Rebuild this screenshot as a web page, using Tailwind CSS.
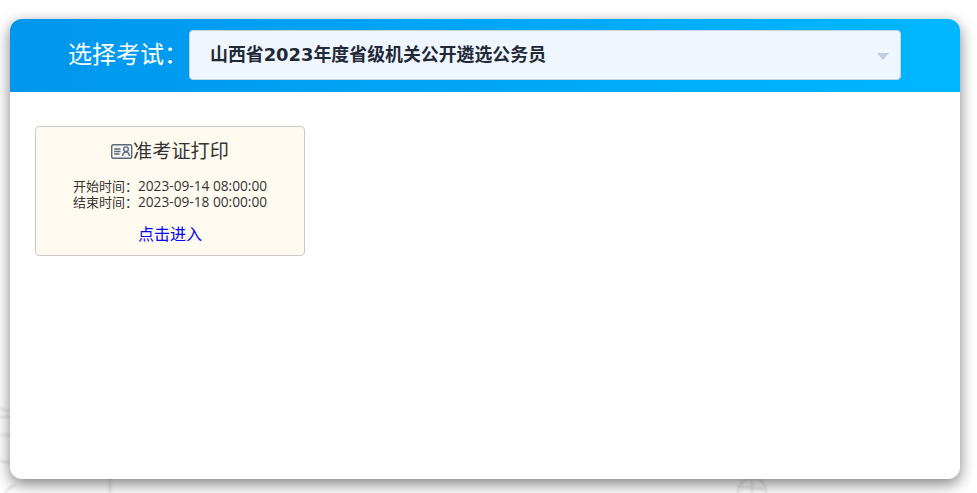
<!DOCTYPE html>
<html lang="zh-CN">
<head>
  <meta charset="UTF-8" />
  <title>选择考试</title>
  <script src="https://cdn.jsdelivr.net/npm/@tailwindcss/browser@4"></script>
</head>
<body class="bg-white h-[493px] w-[977px] overflow-hidden relative font-['Open_Sans','Noto_Sans_CJK_SC',sans-serif]">

  <!-- faint background sketch -->
  <svg class="absolute inset-0 blur-[1px]" width="977" height="493" fill="none" stroke="#d8d8d8" stroke-width="1.5">
    <path d="M0 409 C4 410 8 411 12 411" />
    <path d="M0 417 L12 417" />
    <path d="M0 435 L12 435" />
    <path d="M0 461 L12 463" />
    <path d="M5 493 C8 488 12 486 16 485" />
    <path d="M110 478 L110 493" />
    <path d="M738 493 C738 484 744 478 753 478 C762 478 766 486 766 493" />
    <path d="M740 487 L764 489" />
    <path d="M752 478 L752 493" />
  </svg>

  <!-- Main panel -->
  <div class="absolute left-[10px] top-[19px] w-[950px] h-[460px] bg-white rounded-[12px] overflow-hidden">
    <div class="h-[73px] flex items-start bg-gradient-to-r from-[#0096ee] to-[#00b7ff] pl-[58px] pt-[11px]">
      <span class="w-[121px] h-[50px] pb-[3px] flex items-center text-[24px] leading-none text-white whitespace-nowrap">选择考试：</span>
      <div class="w-[712px] h-[50px] flex items-center justify-between pl-[20px] pr-[11px] bg-[#eff6fe] border border-[#c5d3e2] rounded-[4px]">
        <span class="text-[17.9px] font-bold text-[#1f2937] whitespace-nowrap font-['DejaVu_Sans','Noto_Sans_CJK_SC',sans-serif]">山西省2023年度省级机关公开遴选公务员</span>
        <span class="w-0 h-0 border-x-[6px] border-x-transparent border-t-[7px] border-t-[#c0cddd] mt-[3px]"></span>
      </div>
    </div>

    <div class="pt-[34px] pl-[25px]">
      <!-- Exam card -->
      <div class="w-[270px] h-[130px] bg-[#fffaf0] border border-[#c9c9c9] rounded-[4px] flex flex-col items-center text-[#333]">
        <div class="mt-[12px] flex items-center text-[19.2px] leading-[24px]">
          <svg width="22" height="15" viewBox="0 0 22 15" fill="none" stroke="#5f6a78" stroke-width="1.4">
            <rect x="0.7" y="0.7" width="20" height="13.6" rx="1.5" fill="#f4f4f2" />
            <path d="M3.2 5H9.5M3.2 7.5H9.5M3.2 10H8.5" />
            <circle cx="15" cy="5.2" r="2.3" />
            <path d="M11.5 12C12 9 13.5 8 15 8C16.5 8 18 9 18.5 12" />
          </svg>
          <span>准考证打印</span>
        </div>
        <div class="mt-[15px] text-[13px] leading-[16px] whitespace-nowrap">
          <p>开始时间：<span class="text-[13.7px]">2023-09-14 08:00:00</span></p>
          <p>结束时间：<span class="text-[13.7px]">2023-09-18 00:00:00</span></p>
        </div>
        <a href="#" class="mt-[13px] text-[16px] leading-[22px] text-[#0000ff]">点击进入</a>
      </div>
    </div>
  </div>

  <!-- Panel shadow sits over the sketch -->
  <div class="absolute left-[10px] top-[19px] w-[950px] h-[460px] rounded-[12px] shadow-[0_5px_15px_rgba(0,0,0,0.5)] pointer-events-none"></div>
</body>
</html>
